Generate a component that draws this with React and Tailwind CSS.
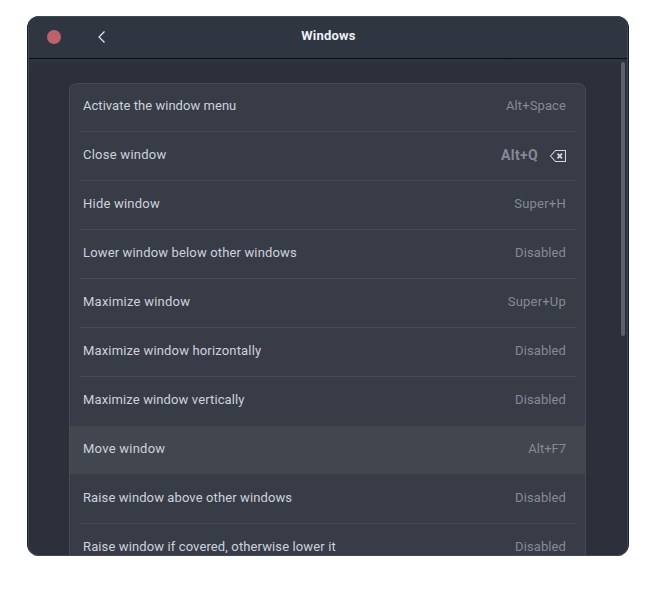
const rows = [
  { name: "Activate the window menu", keys: "Alt+Space", nameTracking: "tracking-[0.04px]", keyTracking: "tracking-[0.1px]" },
  { name: "Close window", keys: "Alt+Q", nameTracking: "tracking-[0.25px]", edited: true },
  { name: "Hide window", keys: "Super+H", nameTracking: "tracking-[0.22px]", keyTracking: "tracking-[0.24px]" },
  { name: "Lower window below other windows", keys: "Disabled", nameTracking: "tracking-[0.15px]", keyTracking: "tracking-[0.1px]" },
  { name: "Maximize window", keys: "Super+Up", nameTracking: "tracking-[0.23px]", keyTracking: "tracking-[0.2px]" },
  { name: "Maximize window horizontally", keys: "Disabled", nameTracking: "tracking-[0.16px]", keyTracking: "tracking-[0.1px]" },
  { name: "Maximize window vertically", keys: "Disabled", nameTracking: "tracking-[0.12px]", keyTracking: "tracking-[0.1px]", noLine: true },
  { name: "Move window", keys: "Alt+F7", nameTracking: "tracking-[0.25px]", hover: true, noLine: true },
  { name: "Raise window above other windows", keys: "Disabled", nameTracking: "tracking-[0.11px]", keyTracking: "tracking-[0.1px]" },
  { name: "Raise window if covered, otherwise lower it", keys: "Disabled", nameTracking: "tracking-[0.12px]", keyTracking: "tracking-[0.1px]" },
];

function ResetIcon() {
  return (
    <svg width="17" height="12" viewBox="0 0 17 12" fill="none" className="ml-[11px] mt-[3px] block">
      <path d="M6.5 0.5H16.5V11.5H6.5L1.5 6Z" stroke="#d3d8e3" strokeWidth="1.1" strokeLinejoin="round" />
      <path d="M8.5 3.7L13 8.3M13 3.7L8.5 8.3" stroke="#d3d8e3" strokeWidth="1.8" />
    </svg>
  );
}

function Row({ name, keys, nameTracking, keyTracking = "", edited, hover, noLine }) {
  return (
    <div>
      <div className={`flex h-12 items-center justify-between pl-[13px] pr-[19px] pb-[3px] ${hover ? "bg-[#42464f]" : ""}`}>
        <span className={`text-[13px] leading-4 text-[#cdd2dd] ${nameTracking}`}>{name}</span>
        {edited ? (
          <span className="flex items-center">
            <span className="text-[14px] font-bold leading-4 tracking-[0.35px] text-[#868a95]">{keys}</span>
            <ResetIcon />
          </span>
        ) : (
          <span className={`text-[13px] leading-4 text-[#868a95] ${keyTracking}`}>{keys}</span>
        )}
      </div>
      <div className={noLine ? "h-px bg-[#383c47]" : "ml-2.5 mr-[9px] h-px bg-[#464a55]"} />
    </div>
  );
}

export default function App() {
  return (
    <div className="h-[596px] w-[656px] overflow-hidden bg-white pl-[27px] pt-4 font-['Roboto',sans-serif]">
      <div className="h-[540px] w-[602px] overflow-hidden rounded-[12px] border-x border-[#1b1d24] bg-[#2c303b]">
        <div className="flex h-full flex-col overflow-hidden rounded-[11px] border border-[#434854]">
          <header className="flex h-[41px] shrink-0 items-center bg-[#2f3541]">
            <div className="flex w-[200px] items-center pb-[2px] pl-[18px]">
              <span className="h-3.5 w-3.5 rounded-full bg-[#bf616a]" />
              <svg width="9" height="14" viewBox="0 0 9 14" fill="none" className="ml-9 block">
                <path d="M7.5 1.5L2 7L7.5 12.5" stroke="#e5e9f0" strokeWidth="1.2" />
              </svg>
            </div>
            <h1 className="w-[199px] pb-[3px] text-center text-[13px] font-bold leading-4 tracking-[0.2px] text-[#eceff4]">Windows</h1>
          </header>
          <div className="h-px shrink-0 bg-[#0d0e12]" />
          <main className="flex min-h-0 flex-1 justify-between bg-linear-to-b from-[#303440] to-[#2c303b] to-[6px] pl-10">
            <div className="mt-6 w-[517px] overflow-hidden rounded-t-[8px] border border-b-0 border-[#464a55] bg-[#383c47]">
              <div className="-mt-px">
                {rows.map((row) => (
                  <Row key={row.name} {...row} />
                ))}
              </div>
            </div>
            <div className="mr-[2px] mt-[3px] h-[274px] w-1 rounded-full bg-[#5c616d]" />
          </main>
        </div>
      </div>
    </div>
  );
}
